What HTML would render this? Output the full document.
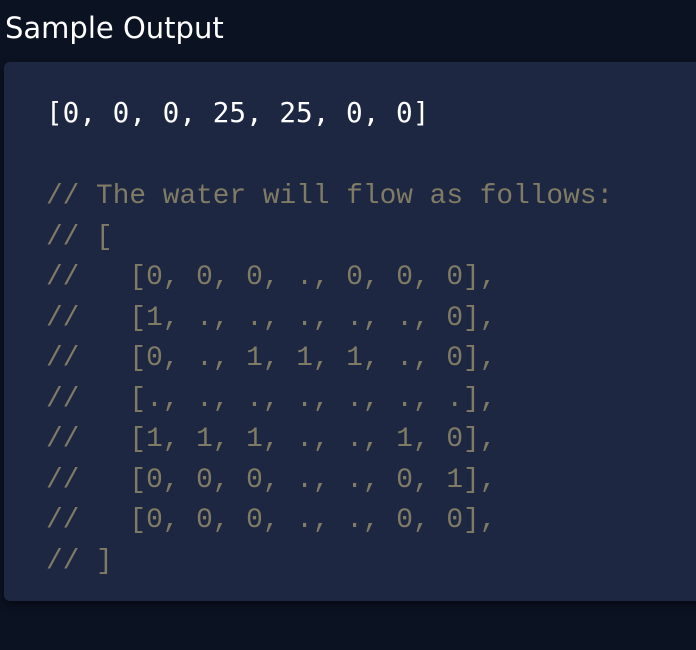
<!DOCTYPE html>
<html><head><style>
html,body{margin:0;padding:0;width:696px;height:650px;background:#0b1221;overflow:hidden}
h2{position:absolute;left:5px;top:11px;margin:0;font:500 29px "DejaVu Sans","Liberation Sans",sans-serif;color:#fff;letter-spacing:0}
.box{position:absolute;left:4px;top:62px;width:720px;height:539px;background:#1e2742;border-radius:6px;box-shadow:0 3px 8px rgba(0,0,0,.5)}
pre{position:absolute;left:46px;top:93px;margin:0;font:27.8px/40.5px "Liberation Mono",monospace;color:#7f7b65;white-space:pre}
.w{color:#fff;font-family:"DejaVu Sans Mono","Liberation Mono",monospace;font-size:27.7px}
</style></head><body>
<h2>Sample Output</h2>
<div class="box"></div>
<pre><span class="w">[0, 0, 0, 25, 25, 0, 0]</span>

// The water will flow as follows:
// [
//   [0, 0, 0, ., 0, 0, 0],
//   [1, ., ., ., ., ., 0],
//   [0, ., 1, 1, 1, ., 0],
//   [., ., ., ., ., ., .],
//   [1, 1, 1, ., ., 1, 0],
//   [0, 0, 0, ., ., 0, 1],
//   [0, 0, 0, ., ., 0, 0],
// ]</pre>
</body></html>
